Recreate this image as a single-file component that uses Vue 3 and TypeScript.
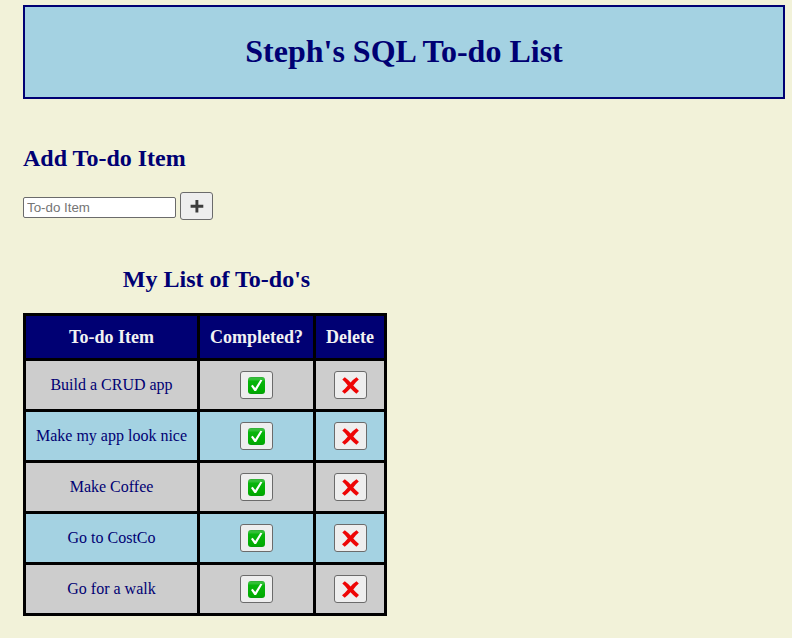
<script setup lang="ts">
import { ref } from 'vue'

interface Todo {
  id: number
  item: string
}

const draft = ref('')
const todos = ref<Todo[]>([
  { id: 1, item: 'Build a CRUD app' },
  { id: 2, item: 'Make my app look nice' },
  { id: 3, item: 'Make Coffee' },
  { id: 4, item: 'Go to CostCo' },
  { id: 5, item: 'Go for a walk' },
])

function addTodo(): void {
  const item = draft.value.trim()
  if (!item) return
  todos.value.push({ id: Date.now(), item })
  draft.value = ''
}

function removeTodo(id: number): void {
  todos.value = todos.value.filter((todo) => todo.id !== id)
}
</script>

<template>
  <main class="page">
    <header class="banner">
      <h1>Steph's SQL To-do List</h1>
    </header>

    <h2 class="add-title">Add To-do Item</h2>
    <form class="add-form" @submit.prevent="addTodo">
      <input v-model="draft" type="text" placeholder="To-do Item" />
      <button type="submit" class="btn">
        <svg class="icon" viewBox="0 0 19 18">
          <path d="M9.9 3v12.4M3.6 9.2h12.7" fill="none" stroke="#3c3c3c" stroke-width="2.9" />
        </svg>
      </button>
    </form>

    <h2 class="list-title">My List of To-do's</h2>
    <table class="todos">
      <thead>
        <tr>
          <th class="col-item">To-do Item</th>
          <th class="col-done">Completed?</th>
          <th class="col-delete">Delete</th>
        </tr>
      </thead>
      <tbody>
        <tr v-for="todo in todos" :key="todo.id">
          <td><span class="label">{{ todo.item }}</span></td>
          <td>
            <button type="button" class="btn">
              <svg class="icon" viewBox="0 0 19 18">
                <defs>
                  <linearGradient :id="`green-${todo.id}`" x1="0" y1="0" x2="0" y2="1">
                    <stop offset="0" stop-color="#2fae35" />
                    <stop offset="0.12" stop-color="#38c43c" />
                    <stop offset="0.26" stop-color="#08b40c" />
                    <stop offset="0.85" stop-color="#00ad00" />
                    <stop offset="1" stop-color="#079b0b" />
                  </linearGradient>
                </defs>
                <rect x="1" y="1" width="17" height="17" rx="3" :fill="`url(#green-${todo.id})`" />
                <path d="M4 9.9 5.7 8.7 8.2 12.1 13.4 3.8 15.4 4.3 9.1 14.9H7.4Z" fill="#fff" />
              </svg>
            </button>
          </td>
          <td>
            <button type="button" class="btn" @click="removeTodo(todo.id)">
              <svg class="icon" viewBox="0 0 19 18">
                <path
                  d="M1.3 3.6 3.8 1.2Q7 3.5 9.6 6.5 12.2 3.5 15.5 1.3L17.8 3.6Q14.7 6.2 12.3 9.4 15 12.4 18 15L15.4 17.7Q12.2 15.2 9.5 12.2 6.9 15.2 3.7 17.8L1 15.2Q4.3 12.5 6.8 9.4 4.3 6.2 1.3 3.6Z"
                  fill="#ee0505"
                />
              </svg>
            </button>
          </td>
        </tr>
      </tbody>
    </table>
  </main>
</template>

<style>
body {
  background: #f2f2d9;
}
</style>

<style scoped>
.page {
  box-sizing: border-box;
  height: 638px;
  padding: 5px 7px 0 23px;
  overflow: hidden;
  color: #000073;
  font-family: "Liberation Serif", "Times New Roman", serif;
  font-size: 16px;
}

.banner {
  box-sizing: border-box;
  height: 94px;
  padding-top: 26px;
  border: 2px solid #000073;
  background: #a4d2e2;
  text-align: center;
}

h1,
h2 {
  margin: 0;
  font-weight: bold;
}

h1 {
  font-size: 32px;
  line-height: 36px;
}

h2 {
  font-size: 24px;
  line-height: 28px;
}

.add-title {
  margin-top: 45px;
}

.add-form {
  display: flex;
  align-items: flex-start;
  gap: 4px;
  height: 28px;
  margin-top: 20px;
}

.add-form input {
  box-sizing: border-box;
  width: 153px;
  height: 21px;
  margin: 5px 0 0;
  padding: 1px 3px;
  border: 1px solid #6b6b6b;
  border-radius: 2px;
  background: #fff;
  font: 13.333px "Liberation Sans", Arial, sans-serif;
}

.add-form input::placeholder {
  color: #757575;
}

.btn {
  box-sizing: border-box;
  display: inline-flex;
  align-items: center;
  justify-content: center;
  width: 33px;
  height: 28px;
  padding: 0;
  border: 1px solid #6b6b6b;
  border-radius: 3px;
  background: #eee;
  vertical-align: middle;
}

.icon {
  display: block;
  width: 19px;
  height: 18px;
}

.list-title {
  width: 364px;
  box-sizing: border-box;
  margin-top: 45px;
  padding-left: 23px;
  text-align: center;
}

.todos {
  width: 364px;
  margin-top: 20px;
  border-spacing: 3px;
  table-layout: fixed;
  background: #000;
  text-align: center;
}

.todos th {
  height: 42px;
  padding: 0;
  background: #000073;
  color: #f2f2f2;
  font-size: 18px;
  line-height: 20px;
}

.col-item {
  width: 171px;
}

.col-done {
  width: 113px;
}

.todos td {
  height: 48px;
  padding: 0;
  background: #cdcdcd;
  line-height: 18px;
}

.todos tbody tr:nth-child(even) td {
  background: #a4d2e2;
}
</style>
